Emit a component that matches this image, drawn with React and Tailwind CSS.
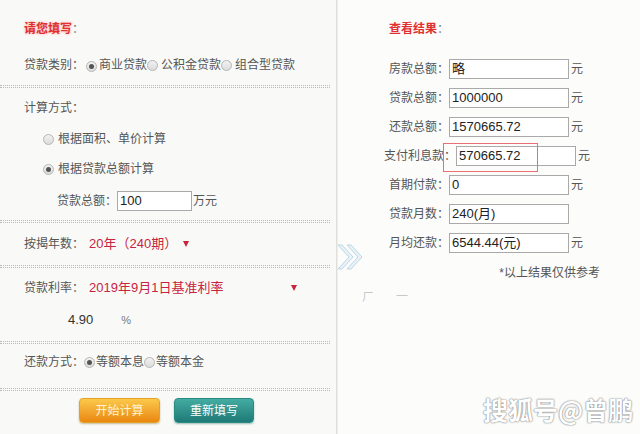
import React from "react";

const font = { fontFamily: '"Liberation Sans", "Noto Sans CJK SC", sans-serif' };

function Radio({ checked }) {
  return (
    <span className="inline-flex w-[11px] h-[11px] shrink-0 items-center justify-center rounded-full border border-[#b5b5b5] bg-gradient-to-b from-[#f2f2f2] to-[#dcdcdc]">
      {checked && <span className="w-[5px] h-[5px] rounded-full bg-[#555]" />}
    </span>
  );
}

function Dots() {
  return <div className="h-[3px] w-[330px] border-y border-dotted border-[#b9bdb6]" />;
}

function Caret() {
  return <span className="inline-block w-0 h-0 border-x-[3px] border-x-transparent border-t-[6px] border-t-[#c8233f]" />;
}

function ResultRow({ label, value, unit = true, wide }) {
  return (
    <div className={`flex items-center h-[20px] ${wide ? "pl-[46px]" : "pl-[51px]"}`}>
      <span className="text-[12px] text-[#555]">{label}：</span>
      <div className="w-[120px] h-[20px] border border-[#a9a9a9] bg-white flex items-center pl-[2px] text-[13px] text-[#222]">
        {value}
      </div>
      {unit && <span className="ml-[2px] text-[12px] text-[#555]">元</span>}
    </div>
  );
}

export default function App() {
  return (
    <div className="relative w-[640px] h-[434px] flex overflow-hidden bg-[#fcfcfb]" style={font}>
      {/* left form */}
      <div className="w-[337px] h-full bg-[#f9faf7] border-r border-[#dedfd9] pt-[19px] text-[12px] text-[#555]">
        <div className="h-[20px] flex items-center pl-[24px]">
          <span className="font-bold text-[#e0302f] [text-shadow:0_0_3px_#f7a0a0]">请您填写</span>
          <span className="text-[#777]">：</span>
        </div>
        <div className="mt-[16px] h-[20px] flex items-center pl-[24px]">
          <span>贷款类别：</span>
          <span className="ml-[2px]"><Radio checked /></span>
          <span className="ml-[2px]">商业贷款</span>
          <Radio />
          <span className="ml-[3px]">公积金贷款</span>
          <Radio />
          <span className="ml-[3px]">组合型贷款</span>
        </div>
        <div className="mt-[10px]"><Dots /></div>

        <div className="mt-[10px] h-[20px] flex items-center pl-[24px]">计算方式：</div>
        <div className="mt-[11px] h-[20px] flex items-center pl-[43px] gap-[4px]">
          <Radio />
          <span>根据面积、单价计算</span>
        </div>
        <div className="mt-[10px] h-[20px] flex items-center pl-[43px] gap-[4px]">
          <Radio checked />
          <span>根据贷款总额计算</span>
        </div>
        <div className="mt-[12px] h-[20px] flex items-center pl-[57px]">
          <span>贷款总额：</span>
          <div className="w-[75px] h-[20px] border border-[#a9a9a9] bg-white flex items-center pl-[2px] text-[13px] text-[#222]">100</div>
          <span className="ml-[1px]">万元</span>
        </div>
        <div className="mt-[9px]"><Dots /></div>

        <div className="mt-[11px] h-[20px] flex items-center pl-[24px]">
          <span>按揭年数：</span>
          <span className="ml-[5px] text-[13px] text-[#c8233f]">20年（240期）</span>
          <span className="ml-[6px] mb-[3px]"><Caret /></span>
        </div>
        <div className="mt-[11px]"><Dots /></div>

        <div className="mt-[10px] h-[20px] flex items-center pl-[24px]">
          <span>贷款利率：</span>
          <span className="ml-[5px] text-[13px] text-[#c8233f]">2019年9月1日基准利率</span>
          <span className="ml-[68px] mb-[3px]"><Caret /></span>
        </div>
        <div className="mt-[12px] h-[20px] flex items-center pl-[68px]">
          <span className="text-[13px] text-[#333]">4.90</span>
          <span className="ml-[28px] text-[11px] text-[#777]">%</span>
        </div>
        <div className="mt-[11px]"><Dots /></div>

        <div className="mt-[8px] h-[20px] flex items-center pl-[24px]">
          <span>还款方式：</span>
          <Radio checked />
          <span className="ml-[1px]">等额本息</span>
          <Radio />
          <span className="ml-[1px]">等额本金</span>
        </div>
        <div className="mt-[16px]"><Dots /></div>

        <div className="mt-[7px] flex pl-[79px] gap-[14px]">
          <button className="w-[81px] h-[25px] rounded-[4px] bg-gradient-to-b from-[#fbc94a] to-[#e8870a] border border-[#e3a126] text-[12px] text-[#fff3cf] shadow-[0_1px_2px_#c9b79a]">
            开始计算
          </button>
          <button className="w-[80px] h-[25px] rounded-[4px] bg-gradient-to-b from-[#44aca2] to-[#1d7a76] border border-[#2a8a84] text-[12px] text-white shadow-[0_1px_2px_#9cb8b5]">
            重新填写
          </button>
        </div>
      </div>

      {/* right results */}
      <div className="flex-1 h-full border-l border-[#f0f0e2] pt-[19px] text-[12px]">
        <div className="h-[20px] flex items-center pl-[51px]">
          <span className="font-bold text-[#e0302f]">查看结果</span>
          <span className="text-[#777]">：</span>
        </div>
        <div className="mt-[20px] flex flex-col gap-[9px]">
          <ResultRow label="房款总额" value="略" />
          <ResultRow label="贷款总额" value="1000000" />
          <ResultRow label="还款总额" value="1570665.72" />
          <ResultRow label="支付利息款" value="570665.72" wide />
          <ResultRow label="首期付款" value="0" />
          <ResultRow label="贷款月数" value="240(月)" unit={false} />
          <ResultRow label="月均还款" value="6544.44(元)" />
        </div>
        <div className="mt-[10px] h-[20px] flex items-center justify-end pr-[40px] text-[12px] text-[#555]">
          *以上结果仅供参考
        </div>
        <div className="mt-[5px] pl-[24px] flex gap-[22px] text-[12px] text-[#c8c8c8]">
          <span>ㄏ</span>
          <span>一</span>
        </div>
      </div>

      {/* highlight box */}
      <div className="absolute left-[443px] top-[143px] w-[95px] h-[29px] border-[1.5px] border-solid border-[#ea6f72]" />

      {/* chevrons */}
      <svg className="absolute left-[334px] top-[242px]" width="32" height="30" viewBox="0 0 32 30">
        <path d="M4 3 L15 15 L4 27 L8 27 L19 15 L8 3 Z" fill="#e8f2f7" stroke="#bcd7e6" strokeWidth="1" />
        <path d="M13 3 L24 15 L13 27 L17 27 L28 15 L17 3 Z" fill="#e8f2f7" stroke="#bcd7e6" strokeWidth="1" />
      </svg>

      {/* watermark */}
      <div
        className="absolute left-[483px] top-[391px] text-[25px] font-semibold text-white [text-shadow:0_0_2px_#8a8a8a,0_0_1px_#6f6f6f]"
        style={{ fontFamily: '"Noto Sans CJK SC", sans-serif' }}
      >
        搜狐号@曾鹏
      </div>
    </div>
  );
}
